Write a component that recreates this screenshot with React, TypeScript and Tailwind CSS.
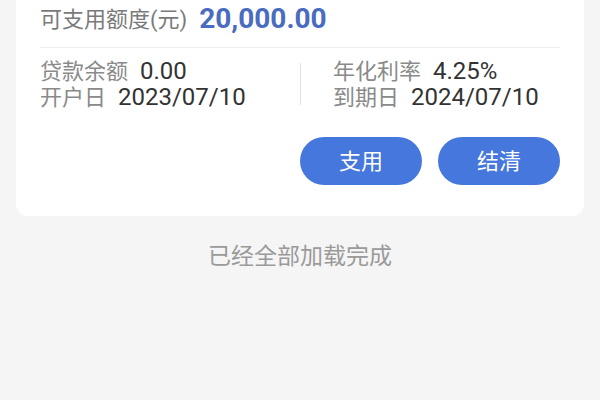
import React from "react";

const font = { fontFamily: 'Roboto, "Noto Sans CJK SC", sans-serif' };

function Field({ label, value }: { label: string; value: string }) {
  return (
    <div className="flex items-center h-[26px] whitespace-nowrap">
      <span className="text-[22px] text-[#8a8a8a]">{label}</span>
      <span className="ml-3 text-[24px] text-[#333333]">{value}</span>
    </div>
  );
}

export default function App() {
  return (
    <div className="w-[600px] h-[400px] bg-[#f5f5f5] overflow-hidden" style={font}>
      <div className="px-4">
        <div className="bg-white rounded-b-xl px-6 pb-[31px]">
          {/* Available credit */}
          <div className="flex items-center h-[38px] whitespace-nowrap">
            <span className="text-[22px] text-[#7a7a7a]">可支用额度(元)</span>
            <span className="ml-3 text-[28px] font-bold text-[#4a6cc0]">20,000.00</span>
          </div>
          <div className="mt-[9px] h-px bg-[#eeeeee]" />

          {/* Loan details */}
          <div className="grid grid-cols-2 pt-[10px]">
            <div className="flex flex-col">
              <Field label="贷款余额" value="0.00" />
              <Field label="开户日" value="2023/07/10" />
            </div>
            <div className="flex items-center">
              <div className="w-px h-[42px] bg-[#e2e2e2]" />
              <div className="flex flex-col pl-[32px]">
                <Field label="年化利率" value="4.25%" />
                <Field label="到期日" value="2024/07/10" />
              </div>
            </div>
          </div>

          {/* Actions */}
          <div className="flex justify-end gap-4 mt-[27px]">
            <button className="w-[122px] h-[48px] rounded-full bg-[#4677dc] text-white text-[22px]">
              支用
            </button>
            <button className="w-[122px] h-[48px] rounded-full bg-[#4677dc] text-white text-[22px]">
              结清
            </button>
          </div>
        </div>
      </div>

      <p className="mt-[26px] text-center text-[23px] leading-[30px] text-[#9a9a9a]">
        已经全部加载完成
      </p>
    </div>
  );
}
